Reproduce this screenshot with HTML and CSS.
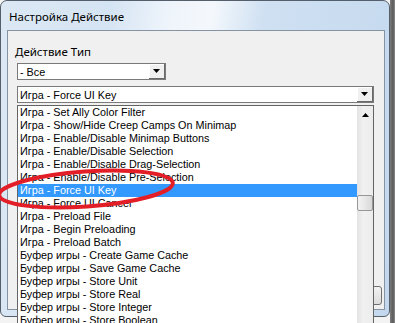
FILE: index.html
```html
<!DOCTYPE html>
<html lang="ru">
<head>
    <meta charset="UTF-8" />
    <title>Настройка Действие</title>
    <link rel="stylesheet" href="styles.css">
</head>
<body>
<div class="desk">
    <div class="window">
        <div class="title">Настройка Действие</div>
        <div class="client">
            <div class="field-label">Действие Тип</div>

            <div class="combo combo-short">
                <span class="combo-text">- Все</span>
                <span class="combo-btn"><svg width="7" height="4" viewBox="0 0 7 4"><path d="M0 0h7L3.5 4z" fill="#000"/></svg></span>
            </div>

            <div class="combo-wrap">
                <div class="combo combo-long">
                    <span class="combo-text">Игра - Force UI Key</span>
                    <span class="combo-btn"><svg width="7" height="4" viewBox="0 0 7 4"><path d="M0 0h7L3.5 4z" fill="#000"/></svg></span>
                </div>

                <div class="dropdown">
                    <ul class="options">
                        <li>Игра - Set Ally Color Filter</li>
                        <li>Игра - Show/Hide Creep Camps On Minimap</li>
                        <li>Игра - Enable/Disable Minimap Buttons</li>
                        <li>Игра - Enable/Disable Selection</li>
                        <li>Игра - Enable/Disable Drag-Selection</li>
                        <li>Игра - Enable/Disable Pre-Selection</li>
                        <li class="selected">Игра - Force UI Key</li>
                        <li>Игра - Force UI Cancel</li>
                        <li>Игра - Preload File</li>
                        <li>Игра - Begin Preloading</li>
                        <li>Игра - Preload Batch</li>
                        <li>Буфер игры - Create Game Cache</li>
                        <li>Буфер игры - Save Game Cache</li>
                        <li>Буфер игры - Store Unit</li>
                        <li>Буфер игры - Store Real</li>
                        <li>Буфер игры - Store Integer</li>
                        <li>Буфер игры - Store Boolean</li>
                    </ul>
                    <div class="scrollbar">
                        <span class="arrow-up"><svg width="7" height="4" viewBox="0 0 7 4"><path d="M0 4h7L3.5 0z" fill="#000"/></svg></span>
                        <span class="thumb"></span>
                    </div>
                </div>
            </div>

            <div class="footer">
                <button class="btn" type="button">OK</button>
            </div>
        </div>
    </div>
    <div class="edge"></div>

    <svg class="mark" width="395" height="323" viewBox="0 0 395 323">
        <ellipse cx="86" cy="189" rx="87" ry="17.5" transform="rotate(-4 86 189)" fill="none" stroke="#e41e26" stroke-width="4"/>
    </svg>
</div>
</body>
</html>
```

FILE: styles.css
```css
body {
    margin: 0;
    background: #f3f3f3;
    font-family: "Liberation Sans", Arial, sans-serif;
}

*, *:before, *:after {
    box-sizing: border-box;
}

.desk {
    position: relative;
    width: 395px;
    height: 323px;
    display: flex;
    overflow: hidden;
}

.window {
    width: 390px;
    height: 317px;
    border: 1px solid #555f6b;
    border-radius: 7px 7px 6px 6px;
    background: linear-gradient(100deg, #dce8f4 0%, #d5e4f3 25%, #eef4fb 38%, #f4f8fc 48%, #cfe0f2 60%, #c3d8ee 100%);
    padding: 0 4px 6px 6px;
    display: flex;
    flex-direction: column;
}

.edge {
    width: 5px;
    height: 323px;
    background: linear-gradient(90deg, #7d7d7d, #5b5b5b 60%, #8a8a8a);
}

.title {
    height: 29px;
    padding: 8px 0 0 2px;
    font-family: "Noto Sans", sans-serif;
    font-size: 11.5px;
    color: #000;
}

.client {
    flex: 1;
    background: #f0f0f0;
    border: 1px solid #8593a3;
    padding: 13px 10px 0 9px;
    display: flex;
    flex-direction: column;
}

.field-label {
    font-family: "Noto Sans", sans-serif;
    font-size: 11.5px;
    line-height: 16px;
    margin-left: -2px;
    margin-bottom: 3px;
}

.combo {
    display: flex;
    align-items: center;
    height: 17px;
    background: #fff;
    border: 1px solid #7a7a7a;
    font-size: 10.8px;
    color: #000;
}

.combo-short {
    width: 149px;
    margin-bottom: 6px;
}

.combo-text {
    flex: 1;
    padding-left: 2px;
    white-space: nowrap;
}

.combo-btn {
    width: 16px;
    height: 15px;
    display: flex;
    align-items: center;
    justify-content: center;
    background: #f0f0f0;
    border-right: 1px solid #696969;
    border-bottom: 1px solid #696969;
    box-shadow: inset 1px 1px 0 #fff;
}

.combo-wrap {
    position: relative;
    z-index: 2;
}

.dropdown {
    position: absolute;
    top: 19px;
    left: 0;
    width: 357px;
    height: 240px;
    background: #fff;
    border: 1px solid #646464;
    display: flex;
}

.options {
    list-style: none;
    margin: 0;
    padding: 0;
    flex: 1;
}

.options li {
    height: 13px;
    line-height: 13px;
    font-size: 10.8px;
    padding-left: 2px;
    white-space: nowrap;
    overflow: hidden;
}

.options li.selected {
    background: #3399ff;
    color: #fff;
}

.scrollbar {
    width: 16px;
    background: linear-gradient(90deg, #e3e3e3, #f1f1f1 40%, #ececec);
    display: flex;
    flex-direction: column;
    align-items: center;
}

.arrow-up {
    height: 17px;
    display: flex;
    align-items: center;
    justify-content: center;
}

.thumb {
    margin-top: 72px;
    width: 16px;
    height: 16px;
    border: 1px solid #979797;
    border-radius: 2px;
    background: linear-gradient(90deg, #f3f3f3, #e7e7e7 50%, #d8d8d8);
}

.footer {
    margin-top: auto;
    display: flex;
    justify-content: flex-end;
    padding: 0 0 4px;
    margin-right: -8px;
}

.btn {
    width: 75px;
    height: 19px;
    border: 1px solid #707070;
    border-radius: 3px;
    background: linear-gradient(#f2f2f2, #dcdcdc);
    font-size: 11px;
}

.mark {
    position: absolute;
    left: 0;
    top: 0;
    pointer-events: none;
    z-index: 5;
}
```
